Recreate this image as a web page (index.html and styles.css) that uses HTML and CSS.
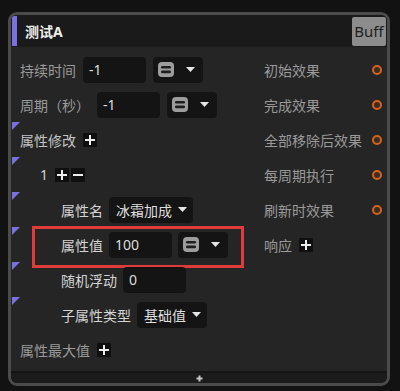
FILE: index.html
```html
<!DOCTYPE html>
<html>
  <head>
    <title>Buff node</title>
    <link rel="stylesheet" href="styles.css">
  </head>
  <body>
    <div class="node">
      <div class="node-head">
        <span class="accent"></span>
        <span class="title">测试A</span>
        <button class="buff">Buff</button>
      </div>

      <div class="node-body">
        <div class="inputs">
          <div class="row">
            <span class="label dim">持续时间</span>
            <input class="num" value="-1">
            <div class="select op">
              <svg class="op-icon" width="16" height="15" viewBox="0 0 16 15"><rect width="16" height="15" rx="4" fill="#9d9d9d"/><rect x="3" y="4" width="10" height="2.6" rx="1.3" fill="#1e1e1e"/><rect x="3" y="8.6" width="10" height="2.6" rx="1.3" fill="#1e1e1e"/></svg>
              <svg class="caret" width="9" height="5" viewBox="0 0 9 5"><polygon points="0,0 9,0 4.5,5" fill="#e6e6e6"/></svg>
            </div>
          </div>
          <div class="row">
            <span class="label dim">周期（秒）</span>
            <input class="num" value="-1">
            <div class="select op">
              <svg class="op-icon" width="16" height="15" viewBox="0 0 16 15"><rect width="16" height="15" rx="4" fill="#9d9d9d"/><rect x="3" y="4" width="10" height="2.6" rx="1.3" fill="#1e1e1e"/><rect x="3" y="8.6" width="10" height="2.6" rx="1.3" fill="#1e1e1e"/></svg>
              <svg class="caret" width="9" height="5" viewBox="0 0 9 5"><polygon points="0,0 9,0 4.5,5" fill="#e6e6e6"/></svg>
            </div>
          </div>
          <div class="row mark">
            <span class="label mid">属性修改</span>
            <span class="btn"><svg width="14" height="14" viewBox="0 0 14 14"><path d="M7 2v10M2 7h10" stroke="#eee" stroke-width="2"/></svg></span>
          </div>
          <div class="row mark l1">
            <span class="label">1</span>
            <span class="btns">
              <span class="btn"><svg width="14" height="14" viewBox="0 0 14 14"><path d="M7 2v10M2 7h10" stroke="#eee" stroke-width="2"/></svg></span>
              <span class="btn"><svg width="14" height="14" viewBox="0 0 14 14"><path d="M2 7h10" stroke="#eee" stroke-width="2"/></svg></span>
            </span>
          </div>
          <div class="row mark l2">
            <span class="label">属性名</span>
            <div class="select text">
              冰霜加成
              <svg class="caret" width="9" height="5" viewBox="0 0 9 5"><polygon points="0,0 9,0 4.5,5" fill="#e6e6e6"/></svg>
            </div>
          </div>
          <div class="row mark l2 hl">
            <span class="label">属性值</span>
            <input class="num" value="100">
            <div class="select op">
              <svg class="op-icon" width="16" height="15" viewBox="0 0 16 15"><rect width="16" height="15" rx="4" fill="#9d9d9d"/><rect x="3" y="4" width="10" height="2.6" rx="1.3" fill="#1e1e1e"/><rect x="3" y="8.6" width="10" height="2.6" rx="1.3" fill="#1e1e1e"/></svg>
              <svg class="caret" width="9" height="5" viewBox="0 0 9 5"><polygon points="0,0 9,0 4.5,5" fill="#e6e6e6"/></svg>
            </div>
          </div>
          <div class="row mark l2">
            <span class="label">随机浮动</span>
            <input class="num" value="0">
          </div>
          <div class="row mark l2">
            <span class="label">子属性类型</span>
            <div class="select text">
              基础值
              <svg class="caret" width="9" height="5" viewBox="0 0 9 5"><polygon points="0,0 9,0 4.5,5" fill="#e6e6e6"/></svg>
            </div>
          </div>
          <div class="row">
            <span class="label dim">属性最大值</span>
            <span class="btn"><svg width="14" height="14" viewBox="0 0 14 14"><path d="M7 2v10M2 7h10" stroke="#eee" stroke-width="2"/></svg></span>
          </div>
        </div>

        <div class="outputs">
          <div class="port">初始效果<span class="dot"></span></div>
          <div class="port">完成效果<span class="dot"></span></div>
          <div class="port">全部移除后效果<span class="dot"></span></div>
          <div class="port">每周期执行<span class="dot"></span></div>
          <div class="port">刷新时效果<span class="dot"></span></div>
          <div class="port">
            响应
            <span class="btn"><svg width="14" height="14" viewBox="0 0 14 14"><path d="M7 2v10M2 7h10" stroke="#eee" stroke-width="2"/></svg></span>
          </div>
        </div>
      </div>

      <div class="node-foot">
        <svg width="7" height="7" viewBox="0 0 7 7"><path d="M3.5 0.5v6M0.5 3.5h6" stroke="#c4c4c4" stroke-width="2"/></svg>
      </div>
    </div>
  </body>
</html>
```

FILE: styles.css
```css
body { margin: 0; background: #121212; font-family: "Noto Sans", "Noto Sans CJK SC", sans-serif; font-size: 14px; }

.node {
  margin: 12px 0 0 8px;
  width: 382px;
  box-sizing: border-box;
  border: 3px solid #4b4b4b;
  border-radius: 9px;
  background: #252525;
  overflow: hidden;
}

.node-head { display: flex; align-items: center; height: 32px; background: #1a1a1a; }
.accent { width: 5px; height: 30px; margin-left: 1px; background: #7b70e0; }
.title { flex: 1; margin-left: 8px; font-weight: bold; color: #eee; }
.buff {
  width: 34px; height: 29px; margin-right: 1px; padding: 0;
  border: none; border-radius: 2px;
  background: #8c8c8c; color: #1e1e1e;
  font-family: "Noto Sans", sans-serif; font-size: 15px;
}

.node-body { display: flex; padding: 5px 0 4px; }
.inputs { width: 253px; }
.outputs { flex: 1; padding-right: 5px; }

.row { position: relative; display: flex; align-items: center; gap: 7px; height: 35px; padding-left: 9px; }
.row.l1 { padding-left: 29px; }
.row.l2 { padding-left: 50px; gap: 6px; }
.row.mark::before {
  content: "";
  position: absolute; left: 1px; top: 0;
  border-top: 8px solid #7b70e0;
  border-right: 8px solid transparent;
}
.row.hl::after {
  content: "";
  position: absolute; left: 21px; top: -1px;
  width: 212px; height: 42px;
  box-sizing: border-box;
  border: 3px solid #e03b3b;
}

.label { color: #d4d4d4; white-space: nowrap; }
.label.dim { color: #9a9a9a; }
.label.mid { color: #c4c4c4; }

.num {
  width: 63px; height: 26px; box-sizing: border-box;
  padding: 0 6px; border: none; border-radius: 4px; outline: none;
  background: #141414; color: #dedede;
  font-family: "Noto Sans", sans-serif; font-size: 14px;
}

.select { display: flex; align-items: center; height: 26px; border-radius: 4px; background: #141414; white-space: nowrap; }
.select.op { gap: 12px; padding: 0 8px 0 5px; }
.select.text { gap: 6px; padding: 0 6px 0 7px; color: #dedede; }
.select svg { display: block; }

.btns { display: flex; gap: 2px; }
.btn { display: block; width: 14px; height: 14px; background: #0f0f0f; }
.btn svg { display: block; }

.port { display: flex; align-items: center; gap: 7px; height: 35px; color: #9a9a9a; white-space: nowrap; }
.dot {
  margin-left: auto;
  width: 10px; height: 10px; box-sizing: border-box;
  border: 2.5px solid #d4631c; border-radius: 50%;
  background: #3c2d24;
}

.node-foot { display: flex; align-items: center; justify-content: center; height: 10px; border-top: 2px solid #151515; background: #1b1b1b; }
```
